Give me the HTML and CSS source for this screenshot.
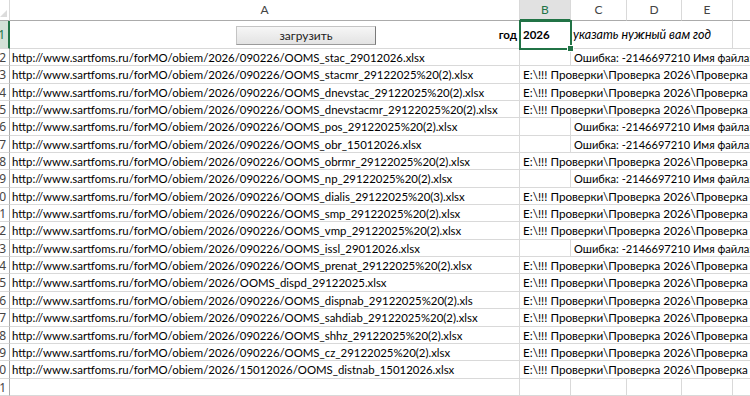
FILE: index.html
```html
<!DOCTYPE html>
<html lang="ru">
<head>
    <meta charset="UTF-8">
    <title>Загрузка файлов</title>
    <link rel="stylesheet" href="styles.css">
</head>
<body>
    <div class="sheet">
        <!-- column headers -->
        <div class="hd corner"><span class="tri"></span></div>
        <div class="hd">A</div>
        <div class="hd active">B</div>
        <div class="hd">C</div>
        <div class="hd">D</div>
        <div class="hd">E</div>
        <div class="hd last"></div>

        <!-- row 1 -->
        <div class="rh active">1</div>
        <div class="c right bold">
            <button class="btn">загрузить</button>
            год
        </div>
        <div class="c bold sel">2026<span class="handle"></span></div>
        <div class="c italic span3">указать нужный вам год</div>
        <div class="c last"></div>

        <div class="rh">2</div>
        <div class="c">http://www.sartfoms.ru/forMO/obiem/2026/090226/OOMS_stac_29012026.xlsx</div>
        <div class="c"></div>
        <div class="c rest">Ошибка: -2146697210 Имя файла: OOMS_stac_29012026.xlsx</div>

        <div class="rh">3</div>
        <div class="c">http://www.sartfoms.ru/forMO/obiem/2026/090226/OOMS_stacmr_29122025%20(2).xlsx</div>
        <div class="c spill">E:\!!! Проверки\Проверка 2026\Проверка файлов\OOMS_stacmr.xlsx</div>

        <div class="rh">4</div>
        <div class="c">http://www.sartfoms.ru/forMO/obiem/2026/090226/OOMS_dnevstac_29122025%20(2).xlsx</div>
        <div class="c spill">E:\!!! Проверки\Проверка 2026\Проверка файлов\OOMS_dnevstac.xlsx</div>

        <div class="rh">5</div>
        <div class="c">http://www.sartfoms.ru/forMO/obiem/2026/090226/OOMS_dnevstacmr_29122025%20(2).xlsx</div>
        <div class="c spill">E:\!!! Проверки\Проверка 2026\Проверка файлов\OOMS_dnevstacmr.xlsx</div>

        <div class="rh">6</div>
        <div class="c">http://www.sartfoms.ru/forMO/obiem/2026/090226/OOMS_pos_29122025%20(2).xlsx</div>
        <div class="c"></div>
        <div class="c rest">Ошибка: -2146697210 Имя файла: OOMS_pos_29122025%20(2).xlsx</div>

        <div class="rh">7</div>
        <div class="c">http://www.sartfoms.ru/forMO/obiem/2026/090226/OOMS_obr_15012026.xlsx</div>
        <div class="c"></div>
        <div class="c rest">Ошибка: -2146697210 Имя файла: OOMS_obr_15012026.xlsx</div>

        <div class="rh">8</div>
        <div class="c">http://www.sartfoms.ru/forMO/obiem/2026/090226/OOMS_obrmr_29122025%20(2).xlsx</div>
        <div class="c spill">E:\!!! Проверки\Проверка 2026\Проверка файлов\OOMS_obrmr.xlsx</div>

        <div class="rh">9</div>
        <div class="c">http://www.sartfoms.ru/forMO/obiem/2026/090226/OOMS_np_29122025%20(2).xlsx</div>
        <div class="c"></div>
        <div class="c rest">Ошибка: -2146697210 Имя файла: OOMS_np_29122025%20(2).xlsx</div>

        <div class="rh">10</div>
        <div class="c">http://www.sartfoms.ru/forMO/obiem/2026/090226/OOMS_dialis_29122025%20(3).xlsx</div>
        <div class="c spill">E:\!!! Проверки\Проверка 2026\Проверка файлов\OOMS_dialis.xlsx</div>

        <div class="rh">11</div>
        <div class="c">http://www.sartfoms.ru/forMO/obiem/2026/090226/OOMS_smp_29122025%20(2).xlsx</div>
        <div class="c spill">E:\!!! Проверки\Проверка 2026\Проверка файлов\OOMS_smp.xlsx</div>

        <div class="rh">12</div>
        <div class="c">http://www.sartfoms.ru/forMO/obiem/2026/090226/OOMS_vmp_29122025%20(2).xlsx</div>
        <div class="c spill">E:\!!! Проверки\Проверка 2026\Проверка файлов\OOMS_vmp.xlsx</div>

        <div class="rh">13</div>
        <div class="c">http://www.sartfoms.ru/forMO/obiem/2026/090226/OOMS_issl_29012026.xlsx</div>
        <div class="c"></div>
        <div class="c rest">Ошибка: -2146697210 Имя файла: OOMS_issl_29012026.xlsx</div>

        <div class="rh">14</div>
        <div class="c">http://www.sartfoms.ru/forMO/obiem/2026/090226/OOMS_prenat_29122025%20(2).xlsx</div>
        <div class="c spill">E:\!!! Проверки\Проверка 2026\Проверка файлов\OOMS_prenat.xlsx</div>

        <div class="rh">15</div>
        <div class="c">http://www.sartfoms.ru/forMO/obiem/2026/OOMS_dispd_29122025.xlsx</div>
        <div class="c spill">E:\!!! Проверки\Проверка 2026\Проверка файлов\OOMS_dispd.xlsx</div>

        <div class="rh">16</div>
        <div class="c">http://www.sartfoms.ru/forMO/obiem/2026/090226/OOMS_dispnab_29122025%20(2).xls</div>
        <div class="c spill">E:\!!! Проверки\Проверка 2026\Проверка файлов\OOMS_dispnab.xls</div>

        <div class="rh">17</div>
        <div class="c">http://www.sartfoms.ru/forMO/obiem/2026/090226/OOMS_sahdiab_29122025%20(2).xlsx</div>
        <div class="c spill">E:\!!! Проверки\Проверка 2026\Проверка файлов\OOMS_sahdiab.xlsx</div>

        <div class="rh">18</div>
        <div class="c">http://www.sartfoms.ru/forMO/obiem/2026/090226/OOMS_shhz_29122025%20(2).xlsx</div>
        <div class="c spill">E:\!!! Проверки\Проверка 2026\Проверка файлов\OOMS_shhz.xlsx</div>

        <div class="rh">19</div>
        <div class="c">http://www.sartfoms.ru/forMO/obiem/2026/090226/OOMS_cz_29122025%20(2).xlsx</div>
        <div class="c spill">E:\!!! Проверки\Проверка 2026\Проверка файлов\OOMS_cz.xlsx</div>

        <div class="rh">20</div>
        <div class="c">http://www.sartfoms.ru/forMO/obiem/2026/15012026/OOMS_distnab_15012026.xlsx</div>
        <div class="c spill">E:\!!! Проверки\Проверка 2026\Проверка файлов\OOMS_distnab.xlsx</div>

        <div class="rh">21</div>
        <div class="c"></div><div class="c"></div><div class="c"></div><div class="c"></div><div class="c"></div><div class="c last"></div>

        <div class="rh">22</div>
        <div class="c"></div><div class="c"></div><div class="c"></div><div class="c"></div><div class="c"></div><div class="c last"></div>
    </div>
</body>
</html>
```

FILE: styles.css
```css
html, body {
    margin: 0;
    padding: 0;
    background: #fff;
    overflow: hidden;
}

.sheet {
    display: grid;
    grid-template-columns: 10px 510px 51px 56px 55px 51px 200px;
    grid-template-rows: 21px 28px;
    grid-auto-rows: 17.35px;
    font-family: Lato, "Noto Sans", sans-serif;
    font-size: 11.4px;
    color: #000;
    width: 750px;
    height: 396px;
    overflow: hidden;
}

.hd {
    border-right: 1px solid #d9d9d9;
    border-bottom: 1px solid #ababab;
    color: #444;
    font-size: 12px;
    text-align: center;
    line-height: 20px;
    background: #fff;
}
.hd.active {
    background: #e1e1e1;
    color: #217346;
    border-bottom: 2px solid #217346;
    line-height: 19px;
}
.hd.last {
    border-right: none;
}
.corner {
    position: relative;
    overflow: hidden;
}
.tri {
    position: absolute;
    right: 2px;
    bottom: 3px;
    border-left: 7px solid transparent;
    border-bottom: 7px solid #dcdcdc;
}

.rh {
    border-right: 1px solid #ababab;
    border-bottom: 1px solid #d9d9d9;
    color: #444;
    font-size: 12px;
    text-align: right;
    direction: rtl;
    overflow: hidden;
    white-space: nowrap;
    line-height: 17px;
    padding-right: 3px;
    box-sizing: border-box;
    font-family: "Noto Sans", sans-serif;
}
.rh.active {
    background: #d3e1d7;
    color: #217346;
    border-right: 2px solid #217346;
    line-height: 27px;
}

.c {
    border-right: 1px solid #d9d9d9;
    border-bottom: 1px solid #d9d9d9;
    padding: 0 2px;
    white-space: nowrap;
    overflow: hidden;
    line-height: 17px;
    min-width: 0;
}
.c.last {
    border-right: none;
}
.spill {
    grid-column: 3 / 8;
    border-right: none;
    font-size: 11.7px;
    padding-left: 3px;
}
.rest {
    grid-column: 4 / 8;
    border-right: none;
    padding-left: 3px;
    font-size: 11.1px;
}
.span3 {
    grid-column: 4 / 7;
}

.right {
    text-align: right;
    position: relative;
    overflow: visible;
    padding-right: 2px;
}
.bold {
    font-weight: bold;
    font-size: 11.5px;
    line-height: 27px;
}
.italic {
    font-style: italic;
    font-size: 12.5px;
    line-height: 27px;
}

.sel {
    position: relative;
    overflow: visible;
    outline: 2px solid #217346;
    outline-offset: -1px;
    padding-left: 3px;
    z-index: 2;
}
.handle {
    position: absolute;
    right: -4px;
    bottom: -4px;
    width: 5px;
    height: 5px;
    background: #217346;
    border: 1px solid #fff;
}

.btn {
    position: absolute;
    left: 226px;
    top: 5px;
    width: 140px;
    height: 19px;
    font-family: Lato, "Noto Sans", sans-serif;
    font-size: 12px;
    font-weight: normal;
    color: #222;
    background: linear-gradient(#f6f6f6, #e3e3e3);
    border: 1px solid #c4c4c4;
    border-right-color: #7a7a7a;
    border-bottom-color: #9a9a9a;
    padding: 0;
    line-height: 17px;
}
```
